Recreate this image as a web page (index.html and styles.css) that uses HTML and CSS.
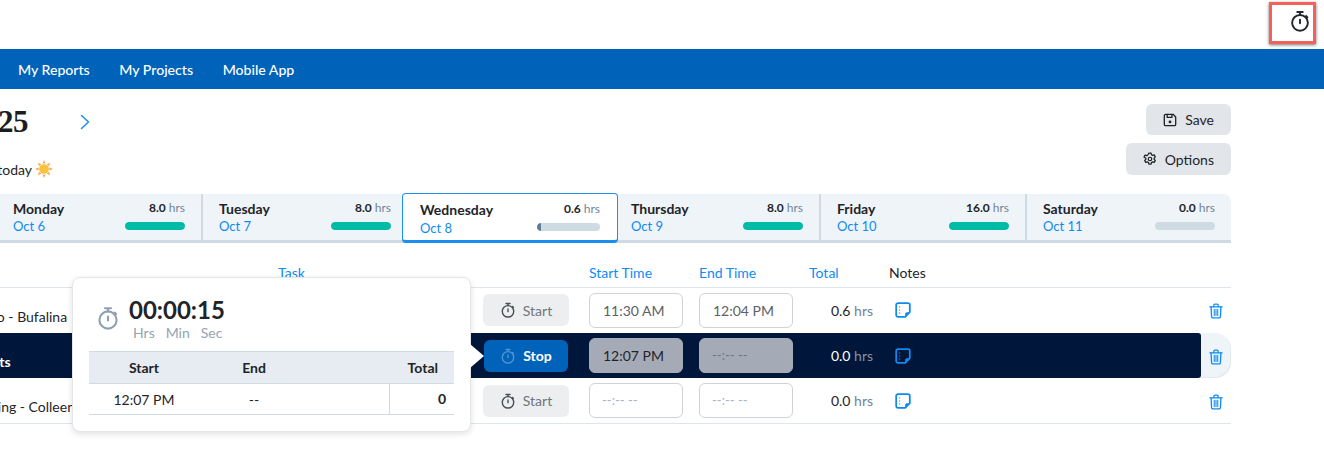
FILE: index.html
```html
<!DOCTYPE html>
<html lang="en">
<head>
<meta charset="utf-8">
<title>Timesheet</title>
<link rel="stylesheet" href="styles.css">
</head>
<body>
<svg class="defs" width="0" height="0" aria-hidden="true">
  <symbol id="watch" viewBox="0 0 24 24">
    <g fill="none" stroke="currentColor" stroke-width="2.100" stroke-linecap="round" stroke-linejoin="round">
      <circle cx="12" cy="14" r="8.600"/>
      <path d="M9 2.200h6M12 2.200v3.200M12 10.500v4M18.600 6.600l1.500 1.400"/>
    </g>
  </symbol>
  <symbol id="note" viewBox="0 0 16 16">
    <path d="M3 1.200h10a1.800 1.800 0 0 1 1.800 1.800v7.200l-4.600 4.600H3A1.800 1.800 0 0 1 1.200 13V3A1.800 1.800 0 0 1 3 1.200z" fill="none" stroke="currentColor" stroke-width="1.800" stroke-linejoin="round"/>
    <path d="M4 5h1.200M4 8h1.200M4 11h1.200" stroke="currentColor" stroke-width="1.200"/>
    <path d="M14.800 10.200h-3a1.600 1.600 0 0 0-1.600 1.600v3z" fill="currentColor"/>
  </symbol>
  <symbol id="trash" viewBox="0 0 16 18">
    <g fill="none" stroke="currentColor" stroke-linecap="round" stroke-linejoin="round">
      <path d="M1 4.200h14M5.500 4V2.600a1.400 1.400 0 0 1 1.400-1.400h2.200a1.400 1.400 0 0 1 1.400 1.400V4" stroke-width="1.500"/>
      <path d="M2.400 4.200l.5 11a1.600 1.600 0 0 0 1.600 1.600h7a1.600 1.600 0 0 0 1.600-1.600l.5-11" stroke-width="1.500"/>
      <path d="M6 7v7M8 7v7M10 7v7" stroke-width="1.200"/>
    </g>
  </symbol>
</svg>

<div class="viewport">
  <header class="topbar">
    <div class="callout">
      <svg class="callout-icon"><use href="#watch"/></svg>
    </div>
  </header>

  <nav class="nav">
    <a class="nav-link">My Reports</a>
    <a class="nav-link">My Projects</a>
    <a class="nav-link">Mobile App</a>
  </nav>

  <main class="page">
    <section class="head">
      <div class="head-left">
        <div class="week-row">
          <h1 class="week">Oct 5 &ndash; 11, 2025</h1>
          <svg class="chev" viewBox="0 0 10 16"><path d="M1.500 1.500 8.500 8l-7 6.500" fill="none" stroke="currentColor" stroke-width="1.500" stroke-linecap="round" stroke-linejoin="round"/></svg>
        </div>
        <p class="greet">Have a great day today
          <svg class="sun" viewBox="0 0 20 20">
            <g fill="#f9a65a"><path d="M10 0l1.600 4H8.400z"/><path d="M10 20l1.600-4H8.400z"/><path d="M0 10l4-1.600v3.200z"/><path d="M20 10l-4-1.600v3.200z"/><path d="M3 3l4 1.700-2.300 2.300z"/><path d="M17 3l-4 1.700 2.300 2.300z"/><path d="M3 17l4-1.700-2.300-2.300z"/><path d="M17 17l-4-1.700 2.300-2.300z"/></g>
            <circle cx="10" cy="10" r="5.400" fill="#fbc23c"/>
          </svg>
        </p>
      </div>
      <div class="actions">
        <button class="action">
          <svg class="action-icon" viewBox="0 0 16 16"><path d="M3 1.500h8.500l3 3V13a1.500 1.500 0 0 1-1.500 1.500H3A1.500 1.500 0 0 1 1.500 13V3A1.500 1.500 0 0 1 3 1.500z" fill="none" stroke="currentColor" stroke-width="1.500" stroke-linejoin="round"/><path d="M4.800 1.500v3.400h5.400V1.500" fill="none" stroke="currentColor" stroke-width="1.500"/><circle cx="8" cy="10.200" r="1.600" fill="currentColor"/></svg>
          Save
        </button>
        <button class="action action-tall">
          <svg class="action-icon" viewBox="0 0 16 16"><path d="M6.700 1.300h2.600l.4 1.900 1.300.7 1.800-.6 1.300 2.300-1.400 1.300v1.400l1.400 1.300-1.300 2.300-1.800-.6-1.300.7-.4 1.900H6.700l-.4-1.900-1.300-.7-1.800.6-1.300-2.300 1.400-1.300V7.100L1.100 5.800l1.300-2.300 1.800.6 1.300-.7z" fill="none" stroke="currentColor" stroke-width="1.400" stroke-linejoin="round"/><circle cx="8" cy="8" r="2" fill="none" stroke="currentColor" stroke-width="1.400"/></svg>
          Options
        </button>
      </div>
    </section>

    <section class="days">
      <div class="day"><div class="day-name"><b>Sunday</b><span class="date">Oct 5</span></div><div class="day-sum"><span class="hrs"><b>0.0</b> hrs</span><span class="bar"></span></div></div>
      <div class="day"><div class="day-name"><b>Monday</b><span class="date">Oct 6</span></div><div class="day-sum"><span class="hrs"><b>8.0</b> hrs</span><span class="bar"><i class="fill"></i></span></div></div>
      <div class="day"><div class="day-name"><b>Tuesday</b><span class="date">Oct 7</span></div><div class="day-sum"><span class="hrs"><b>8.0</b> hrs</span><span class="bar"><i class="fill"></i></span></div></div>
      <div class="day day-on"><div class="day-name"><b>Wednesday</b><span class="date">Oct 8</span></div><div class="day-sum"><span class="hrs"><b>0.6</b> hrs</span><span class="bar"><i class="fill fill-low"></i></span></div></div>
      <div class="day day-after"><div class="day-name"><b>Thursday</b><span class="date">Oct 9</span></div><div class="day-sum"><span class="hrs"><b>8.0</b> hrs</span><span class="bar"><i class="fill"></i></span></div></div>
      <div class="day"><div class="day-name"><b>Friday</b><span class="date">Oct 10</span></div><div class="day-sum"><span class="hrs"><b>16.0</b> hrs</span><span class="bar"><i class="fill"></i></span></div></div>
      <div class="day day-last"><div class="day-name"><b>Saturday</b><span class="date">Oct 11</span></div><div class="day-sum"><span class="hrs"><b>0.0</b> hrs</span><span class="bar"></span></div></div>
    </section>

    <section class="table">
      <div class="row row-head">
        <div class="c-task"><span class="task-title">Task</span></div>
        <div class="c-timer"></div>
        <div class="c-time link">Start Time</div>
        <div class="c-time link">End Time</div>
        <div class="c-total link">Total</div>
        <div class="c-notes">Notes</div>
        <div class="c-del"></div>
      </div>

      <div class="row row-first">
        <div class="c-task">Bufalo - Bufalina</div>
        <div class="c-timer"><button class="timer"><svg class="timer-icon"><use href="#watch"/></svg>Start</button></div>
        <div class="c-time"><span class="time">11:30 AM</span></div>
        <div class="c-time"><span class="time">12:04 PM</span></div>
        <div class="c-total"><span class="hrs"><em>0.6</em> hrs</span></div>
        <div class="c-notes"><svg class="note"><use href="#note"/></svg></div>
        <div class="c-del"><svg class="trash"><use href="#trash"/></svg></div>
      </div>

      <div class="row row-active">
        <div class="active-band">
          <div class="c-task task-on">Reports</div>
          <div class="c-timer"><button class="timer timer-stop"><svg class="timer-icon"><use href="#watch"/></svg>Stop</button></div>
          <div class="c-time"><span class="time time-dim">12:07 PM</span></div>
          <div class="c-time"><span class="time time-dim time-empty">--:-- --</span></div>
          <div class="c-total"><span class="hrs"><em>0.0</em> hrs</span></div>
          <div class="c-notes"><svg class="note"><use href="#note"/></svg></div>
        </div>
        <div class="c-del"><svg class="trash"><use href="#trash"/></svg></div>
      </div>

      <div class="row row-end">
        <div class="c-task">Meeting - Colleen</div>
        <div class="c-timer"><button class="timer"><svg class="timer-icon"><use href="#watch"/></svg>Start</button></div>
        <div class="c-time"><span class="time time-empty">--:-- --</span></div>
        <div class="c-time"><span class="time time-empty">--:-- --</span></div>
        <div class="c-total"><span class="hrs"><em>0.0</em> hrs</span></div>
        <div class="c-notes"><svg class="note"><use href="#note"/></svg></div>
        <div class="c-del"><svg class="trash"><use href="#trash"/></svg></div>
      </div>

      <aside class="pop">
        <span class="pop-arrow"></span>
        <div class="clock">
          <svg class="clock-icon"><use href="#watch"/></svg>
          <div>
            <div class="clock-time">00:00:15</div>
            <div class="clock-units"><span>Hrs</span><span>Min</span><span>Sec</span></div>
          </div>
        </div>
        <div class="pop-table">
          <div class="pop-row pop-head"><span class="p-start">Start</span><span class="p-end">End</span><span class="p-total">Total</span></div>
          <div class="pop-row"><span class="p-start">12:07 PM</span><span class="p-end">--</span><span class="p-total p-sum">0</span></div>
        </div>
      </aside>
    </section>
  </main>
</div>
</body>
</html>
```
FILE: styles.css
```css
* { box-sizing: border-box; }
html, body { margin: 0; padding: 0; }
body {
  width: 1324px;
  height: 458px;
  overflow: hidden;
  background: #fff;
  font-family: Lato, "Liberation Sans", sans-serif;
  color: #1f2428;
}
.defs { position: absolute; }
.viewport { width: 1324px; height: 458px; overflow: hidden; }

.topbar {
  height: 49px;
  display: flex;
  justify-content: flex-end;
  padding: 2px 8px 0 0;
}
.callout {
  width: 47px;
  height: 42px;
  border: 3px solid #f2615c;
  box-shadow: 0 1px 3px rgba(0,0,0,.55);
  display: flex;
  justify-content: flex-end;
  align-items: flex-start;
  padding: 4px 2px 0 0;
}
.callout-icon { width: 22px; height: 24px; color: #23282d; }

.nav {
  height: 40px;
  background: #0063b9;
  display: flex;
  align-items: center;
  gap: 29.6px;
  padding-left: 18px;
}
.nav-link { color: #fff; font-size: 14.1px; font-weight: 500; }

.page { width: 1440px; margin-left: -209px; }

.head {
  display: flex;
  justify-content: space-between;
  height: 105px;
  padding-top: 15px;
}
.week-row { display: flex; align-items: center; height: 36px; }
.week {
  margin: 0;
  width: 237px;
  text-align: right;
  font-family: "Liberation Serif", serif;
  font-size: 31px;
  font-weight: 700;
  letter-spacing: -.5px;
  color: #1a1d20;
}
.chev { width: 10px; height: 16px; margin-left: 52px; color: #1b8ef0; }
.greet {
  margin: 20px 0 0;
  width: 262px;
  font-size: 14px;
  display: flex;
  justify-content: flex-end;
  align-items: center;
  gap: 3px;
  white-space: nowrap;
}
.sun { width: 18px; height: 18px; }

.actions {
  display: flex;
  flex-direction: column;
  align-items: flex-end;
  gap: 8px;
}
.action {
  height: 31px;
  padding: 0 17px;
  border: 0;
  border-radius: 6px;
  background: #e2e5e9;
  color: #1f2428;
  font: 14px Lato, sans-serif;
  display: flex;
  align-items: center;
  gap: 8px;
}
.action-tall { height: 32px; }
.action-icon { width: 14px; height: 14px; }

.days {
  display: flex;
  height: 49px;
  background: #eff4f8;
  border-bottom: 3px solid #cfdbe3;
  border-radius: 0 8px 0 0;
  align-items: stretch;
}
.day {
  width: 206px;
  padding: 6px 16px 0 16px;
  display: flex;
  justify-content: space-between;
  border-right: 2px solid #cfdbe3;
  height: 46px;
}
.day-last { border-right: 0; flex: 1; }
.day-name { display: flex; flex-direction: column; font-size: 14px; line-height: 17px; }
.day-name b { font-weight: 700; }
.date { color: #0d8bf2; font-size: 13px; margin-top: 1px; }
.day-sum { width: 60px; display: flex; flex-direction: column; align-items: flex-end; }
.hrs { font-size: 12px; color: #718499; line-height: 16px; white-space: nowrap; }
.hrs b { color: #1f2428; font-weight: 700; }
.bar {
  display: block;
  width: 60px;
  height: 8px;
  margin-top: 6px;
  border-radius: 4px;
  background: #cfdbe3;
  overflow: hidden;
}
.fill { display: block; width: 100%; height: 100%; background: #00bba6; border-radius: 4px; }
.fill-low { width: 4px; background: #5f7c99; border-radius: 4px 0 0 4px; }

.day-on {
  width: 216px;
  height: 50px;
  margin: -1px 0 0 -7px;
  padding: 7px 17px 0;
  background: #fff;
  border: 2px solid #1b8ef0;
  border-width: 1px 1px 3px 1px;
  border-radius: 4px;
  position: relative;
  z-index: 1;
}
.day-after { width: 203px; padding-left: 13px; }
.day-on .bar { width: 63px; }
.day-on .day-sum { width: 63px; }
.day-on .date { margin-top: 2px; }

.table {
  position: relative;
  margin-top: 19px;
  font-size: 14px;
}
.row {
  display: flex;
  align-items: center;
  height: 45px;
  border-top: 1px solid #dfe6eb;
}
.row-head { height: 25px; padding-top: 2px; border-top: 0; align-items: flex-start; }
.row-first { height: 46px; padding-bottom: 1px; }
.row-active {
  background: linear-gradient(#eff4f8,#eff4f8) no-repeat right / 40px 100%;
  border-top: 0;
  border-bottom: 0;
  border-radius: 0 16px 16px 0;
  box-shadow: inset -1px -1px 0 #e3e9ee;
  overflow: hidden;
}
.row-end { border-top: 0; border-bottom: 1px solid #dfe6eb; height: 46px; }
.active-band {
  display: flex;
  align-items: center;
  height: 45px;
  width: 1410px;
  background: #00163a;
  color: #fff;
  border-radius: 0 3px 3px 0;
  flex: none;
}
.c-task { width: 692px; flex: none; padding: 12px 0 0 174px; white-space: nowrap; }
.row-first .c-task { padding-top: 13px; }
.row-head .c-task { padding: 0 0 0 487px; }
.task-title { color: #0d8bf2; }
.task-on { font-weight: 700; padding-left: 171px; }
.c-timer { width: 106px; flex: none; }
.c-time { width: 110px; flex: none; }
.c-total { width: 64px; flex: none; text-align: right; }
.row-head .c-total { text-align: left; width: 80px; }
.c-notes { width: 76px; flex: none; padding-left: 22px; }
.c-del { flex: 1; text-align: right; padding-right: 8px; }
.link { color: #0d8bf2; }
.row-head .c-notes { padding-left: 0; }

.timer {
  width: 86px;
  height: 32px;
  border: 0;
  border-radius: 6px;
  background: #eceef0;
  color: #6f757b;
  font: 14px Lato, sans-serif;
  display: flex;
  align-items: center;
  justify-content: center;
  gap: 7px;
}
.timer-icon { width: 16px; height: 16px; color: #4a4f55; }
.timer-stop { background: #0063b9; color: #fff; width: 84px; margin-left: 1px; font-weight: 700; }
.timer-stop .timer-icon { color: #4c93d4; }
.time {
  display: block;
  width: 94px;
  height: 35px;
  border: 1px solid #ced3d8;
  border-radius: 6px;
  background: #fff;
  color: #5c6166;
  font-size: 14px;
  line-height: 33px;
  padding-left: 13px;
}
.time-dim { background: #a5abb6; border-color: #a5abb6; color: #1f2428; }
.time-empty { color: #a9b4c0; font-size: 13px; padding-left: 12px; }
.time-dim.time-empty { color: #6c7888; }
.hrs em { font-style: normal; font-size: 14px; color: #1f2428; }
.row-active .hrs em { color: #fff; }
.row-active .hrs { color: #8593a5; }
.c-total .hrs { font-size: 14px; }
.note { width: 16px; height: 16px; color: #0d8bf2; display: block; }
.trash { width: 14px; height: 16px; color: #0d8bf2; display: inline-block; vertical-align: middle; }

.pop {
  position: absolute;
  left: 281px;
  top: 15px;
  width: 399px;
  height: 155px;
  padding: 16px 16px 0;
  background: #fff;
  border: 1px solid #e3e7ea;
  border-radius: 8px;
  box-shadow: 0 2px 6px rgba(0,0,0,.12);
  z-index: 2;
}
.pop-arrow {
  position: absolute;
  right: -14px;
  top: 66px;
  width: 0;
  height: 0;
  border-style: solid;
  border-width: 12px 0 12px 14px;
  border-color: transparent transparent transparent #fff;
}
.clock { display: flex; align-items: flex-start; gap: 9px; height: 51px; padding-left: 7px; }
.clock-icon { width: 24px; height: 24px; color: #8ea0b2; margin-top: 12px; }
.clock-time { font-size: 24px; font-weight: 700; line-height: 28px; color: #1f2428; margin-top: 2px; }
.clock-units { display: flex; gap: 11px; padding-left: 4px; font-size: 14px; color: #95a3b3; line-height: 16px; margin-top: 1px; }
.pop-table { margin-top: 6px; }
.pop-row { display: flex; height: 31px; align-items: center; font-size: 14px; border-bottom: 1px solid #cfdbe3; position: relative; }
.pop-head { background: #e6ecf2; font-weight: 700; height: 33px; border-top: 1px solid #cfdbe3; }
.p-start { width: 110px; text-align: center; }
.p-end { width: 110px; text-align: center; }
.p-total { flex: 1; text-align: right; padding-right: 16px; }
.p-sum { font-weight: 700; align-self: stretch; line-height: 30px; margin-left: 80px; border-left: 1px solid #cfdbe3; padding-right: 8px; }
```
